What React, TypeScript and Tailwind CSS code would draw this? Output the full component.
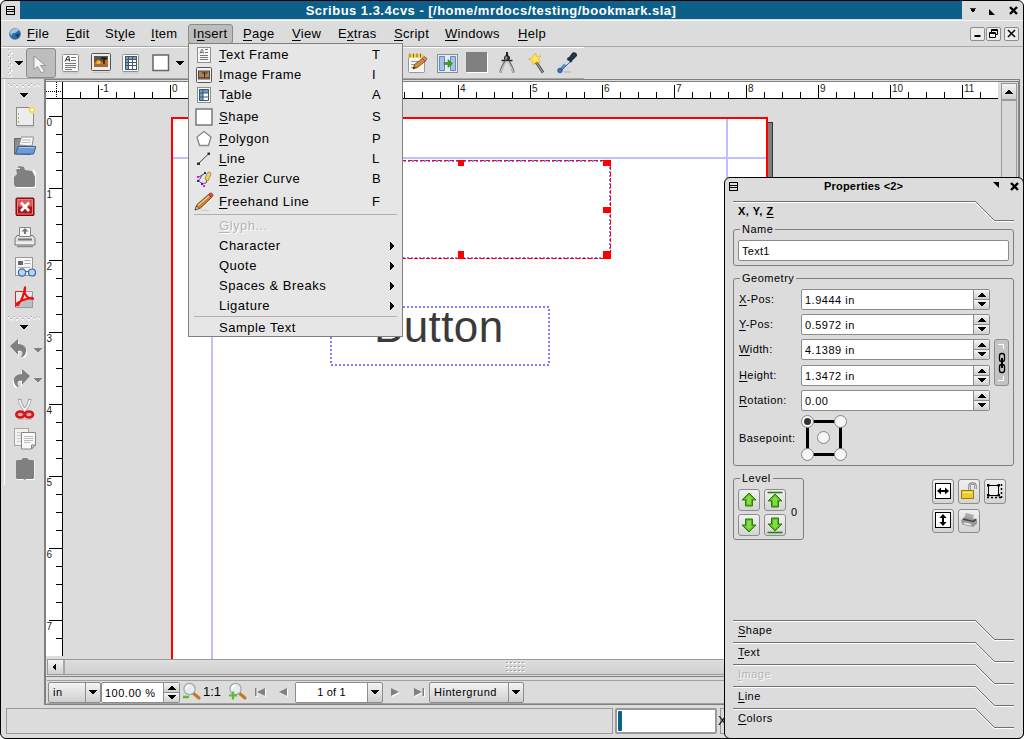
import React from "react";

/* Renders a caption whose mnemonic letter is marked with "&". */
function Caption({ text }: { text: string }) {
  const m = text.match(/^(.*?)&(\S)(.*)$/);
  if (!m) return <>{text}</>;
  return (
    <>
      {m[1]}
      <span className="underline decoration-1 underline-offset-2">{m[2]}</span>
      {m[3]}
    </>
  );
}

function Svg({ w = 22, h = 22, children, className = "" }: { w?: number; h?: number; children: React.ReactNode; className?: string }) {
  return (
    <svg width={w} height={h} viewBox={`0 0 ${w} ${h}`} className={`block shrink-0 ${className}`}>
      {children}
    </svg>
  );
}

const Tri = ({ dir, color = "#000", className = "" }: { dir: "up" | "down" | "left" | "right"; color?: string; className?: string }) => {
  const d = { down: "M0 0h8L4 4.5z", up: "M0 4.5h8L4 0z", left: "M5 0v8L1 4z", right: "M0 0v8L5 4z" }[dir];
  return (
    <svg width={8} height={dir === "up" || dir === "down" ? 5 : 8} className={`block shrink-0 ${className}`} shapeRendering="crispEdges">
      <path d={d} fill={color} />
    </svg>
  );
};

/* ---------- toolbar icons ---------- */

const TextFrameIcon = () => (
  <Svg>
    <rect x="2.5" y="2.5" width="16" height="17" rx="1" fill="#fafafa" stroke="#8f9088" />
    <path d="M5 9.500l2.500-5h1.500l.5 5M6 7.800h3.500" stroke="#333" fill="none" />
    <path d="M11 5.500h5M11 8.500h5M5 11.500h11M5 13.500h11M5 15.500h11M5 17.500h7" stroke="#777" />
    <path d="M3 21h16" stroke="#c4c4c4" />
  </Svg>
);
const ImageFrameIcon = () => (
  <Svg>
    <rect x="1.500" y="1.500" width="19" height="17" rx="1" fill="#eee" stroke="#55574f" />
    <rect x="4" y="4" width="14" height="11" fill="#5b564f" />
    <path d="M4 11l4-3 4 2 6-3v5H4z" fill="#c9701f" />
    <circle cx="8.500" cy="10.500" r="2.200" fill="#f7b52c" />
    <path d="M14 14V7M11 7c2-2 4-1 6 0" stroke="#16120e" fill="none" strokeWidth="1.300" />
    <rect x="4" y="12" width="14" height="3" fill="#a2693a" />
    <path d="M2 20.500h18" stroke="#c4c4c4" />
  </Svg>
);
const TableIcon = () => (
  <Svg>
    <rect x="2.500" y="2.500" width="16" height="17" rx="1" fill="#fafafa" stroke="#8f9088" />
    <rect x="5" y="4" width="12" height="14" fill="#fff" />
    <path d="M5 4h12v4H8v10H5z" fill="#769fd0" />
    <path d="M5.500 4v14M8.500 4v14M12.500 4v14M16.500 4v14M5 4.500h12M5 7.500h12M5 10.500h12M5 13.500h12M5 17.500h12" stroke="#4a5563" />
    <path d="M3 21h16" stroke="#c4c4c4" />
  </Svg>
);
const ShapeIcon = () => (
  <Svg>
    <rect x="3" y="3" width="15.500" height="15.500" fill="#fff" stroke="#666" strokeWidth="1.500" />
  </Svg>
);
const PointerIcon = () => (
  <Svg>
    <path d="M4 4v13.500l3.500-3 4 6.500 3-2-4-5.500h5z" fill="#f4f4f4" stroke="#888" strokeWidth=".8" />
  </Svg>
);
const NotepadIcon = () => (
  <Svg>
    <rect x="2.500" y="4.500" width="16" height="16" rx="1" fill="#f7f7f5" stroke="#999" />
    <path d="M5 9.500h10M5 12.500h8M5 15.500h5" stroke="#999" />
    <path d="M2 2.500h16v3H2z" fill="#f2cf3c" />
    <path d="M4 1.500v4M7.500 1.500v4M11 1.500v4M14.500 1.500v4" stroke="#8b6f00" />
    <path d="M7 17l1.500-4.500L17 6l3 2.500-8.500 7z" fill="#d58a36" stroke="#724010" strokeWidth=".8" />
    <path d="M16 6.500L18 4.500l3 2-1.500 2.500z" fill="#e58a84" stroke="#8c3830" strokeWidth=".7" />
    <path d="M7 17l1-2.500 1.500 1.500z" fill="#222" />
  </Svg>
);
const LinkFramesIcon = () => (
  <Svg>
    <rect x="1.500" y="2.500" width="20" height="18" fill="#e6ebf2" stroke="#8a8f94" />
    <path d="M3.500 4.500h5v14h-5zM14.500 4.500h5v14h-5z" fill="#a5c2e4" stroke="#668abb" />
    <path d="M8 10.500h4V7.500l4.500 4-4.500 4v-3H8z" fill="#3fa01c" stroke="#25700c" strokeWidth=".5" />
  </Svg>
);
const GrayIcon = () => (
  <Svg>
    <path d="M1 1h21v20H1z" fill="#fff" />
    <path d="M0 0h21v20H0z" fill="#808080" />
  </Svg>
);
const CompassIcon = () => (
  <Svg>
    <path d="M11 7C8 11 5.500 15 4.500 20.500M11 7c3 4 5.500 8 6.500 13.500" stroke="#777" strokeWidth="2.500" fill="none" />
    <path d="M11 8C8.500 12 6 16 4.800 20M11 8c2.500 4 5 8 6.200 12" stroke="#e3e3e3" strokeWidth=".9" fill="none" />
    <path d="M5.500 8.500h3.500M13 8.500h3.500" stroke="#222" strokeWidth="1.500" />
    <path d="M11 0v4" stroke="#222" strokeWidth="2" />
    <circle cx="11" cy="6" r="2.500" fill="#444" stroke="#111" />
    <path d="M10 4.500v3" stroke="#ddd" />
  </Svg>
);
const WandIcon = () => (
  <Svg>
    <path d="M10 10l7 10.500" stroke="#555" strokeWidth="3" />
    <path d="M10 10l6.500 10" stroke="#aaa" strokeWidth="1" />
    <path d="M9.500 1l1.300 3.700 4.200-.8-2.700 3.300 2 3.500-4-1L7 13l-.4-4.200-4-1.700 3.900-1.700z" fill="#ffe94a" stroke="#e8b030" strokeWidth=".8" />
  </Svg>
);
const DropperIcon = () => (
  <Svg>
    <path d="M3 18L12 8l2 2L6 18z" fill="#5b8ed0" stroke="#335a8c" strokeWidth=".8" />
    <path d="M8 12l4-4.500 2 2-4 3.500z" fill="#d7e5f5" />
    <path d="M11.500 6l4 4M12.500 7.500l4-5.500c1-1.500 4-.5 3.500 1.500L15 8.500z" stroke="#1f2e3b" strokeWidth="2" fill="#2f4455" />
    <circle cx="4" cy="18.500" r="2.400" fill="#2f6fc1" stroke="#20508f" strokeWidth=".6" />
    <path d="M8 20h7" stroke="#bdbdbd" strokeWidth="1.500" />
  </Svg>
);

const NewIcon = () => (
  <Svg>
    <rect x="2.500" y="1.500" width="17" height="18" fill="#ececec" stroke="#8b8b85" />
    <path d="M4.500 7v2M4.500 11v2M4.500 15v2" stroke="#aaa" />
    <path d="M3 21h17" stroke="#bbb" />
    <circle cx="18" cy="4" r="3.500" fill="#f1e98d" />
    <circle cx="18" cy="4" r="1.500" fill="#fffdf0" />
    <circle cx="18" cy="4" r="2.300" fill="none" stroke="#e6cf3a" />
  </Svg>
);
const OpenIcon = () => (
  <Svg>
    <path d="M.5 18V2.500h6l1 2h9v14z" fill="#8d8d85" stroke="#666" />
    <path d="M5 9L7.500 1h12L18 10z" fill="#f8f8f8" stroke="#909090" />
    <path d="M8 4h9M7.500 6.500h9" stroke="#bbb" />
    <path d="M4 10.500h18L19.500 18H1.500z" fill="#6b9bd2" stroke="#33609c" />
    <path d="M5 11.500h15.500" stroke="#a9c7e9" />
  </Svg>
);
const SaveDisabledIcon = () => (
  <Svg>
    <path d="M2 21.500h20V8l-3-4" stroke="#fff" fill="none" strokeWidth="1.500" />
    <path d="M0 11l3-3-1-5 3-3 5 1 1 3 7 1 3 6v9l-2 1H2l-2-2z" fill="#808080" />
    <path d="M2 3l3-1 1 1" stroke="#fff" fill="none" />
  </Svg>
);
const CloseDocIcon = () => (
  <Svg>
    <rect x="2" y="2" width="18" height="17.500" rx="1" fill="#b51417" stroke="#770a0c" />
    <path d="M3 3h16v7c-5 1-10 2-16 0z" fill="#dd5a5c" />
    <path d="M3.500 3.500h15v14.500h-15z" fill="none" stroke="#e47f80" />
    <path d="M7 6.500l8 8.500M15 6.500L7 15" stroke="#fff" strokeWidth="2.600" />
  </Svg>
);
const PrintIcon = () => (
  <Svg>
    <path d="M3 9.500h16l2 3v6.500H1v-6.500z" fill="#e0e0e0" stroke="#777" />
    <path d="M5.500 1.500h11v9h-11z" fill="#f5f5f5" stroke="#888" />
    <path d="M11 2l3.500 3.500H12V8h-2V5.500H7.500z" fill="#777" />
    <path d="M4 13.500h14" stroke="#777" strokeWidth="2" />
    <path d="M2 17h18" stroke="#fff" />
    <path d="M3 20.500h16" stroke="#888" strokeWidth="1.500" />
  </Svg>
);
const PreviewIcon = () => (
  <Svg>
    <rect x="1.500" y="1.500" width="17" height="18" fill="#f7f7f5" stroke="#999" />
    <rect x="4" y="5" width="5" height="4" fill="#666" />
    <path d="M10.500 4.500h6M10.500 7.500h6M4 11.500h12" stroke="#aaa" />
    <circle cx="8" cy="16.500" r="3.700" fill="#b9d3f2" stroke="#3465a4" strokeWidth="1.200" />
    <circle cx="18" cy="16.500" r="3.500" fill="#b9d3f2" stroke="#3465a4" strokeWidth="1.200" />
    <path d="M11.500 16q1.500-1.500 3 0" stroke="#3465a4" fill="none" />
  </Svg>
);
const PdfIcon = () => (
  <Svg>
    <path d="M1.500 5.500h17v16h-17z" fill="#e6e9ea" stroke="#999" />
    <path d="M1.500 21V5.500h8" stroke="#d22" fill="none" />
    <path d="M2 21L18 9v12z" fill="#b9bfc3" />
    <path d="M11 .5c1 3-1 5 0 7 2 4 5 6 9 5M11 1c-1 7-2 12-7 18-2 1-2-2 1-3 4-2 8-4 14-4" stroke="#f00d0d" strokeWidth="2" fill="none" />
  </Svg>
);
const Undo = ({ flip = false }: { flip?: boolean }) => (
  <Svg w={18} h={20} className={flip ? "-scale-x-100" : ""}>
    <path d="M1 8L9 2v5c6 0 9 4 8 8-1 4-3 4-4 4 2-4 0-7-4-6v5z" fill="#fff" />
    <path d="M0 7L8 0v5c6 0 9 4 8 8-1 4-3 5-5 5 3-4 1-7-3-6v4z" fill="#808080" />
  </Svg>
);
const CutIcon = () => (
  <Svg>
    <path d="M5.500 1c1 5 3 9 6 12M16 1c-1 5-3 9-6 12" stroke="#999" strokeWidth="3.400" fill="none" />
    <path d="M5.500 2c1 4 3 8 6 11M16 2c-1 4-3 8-6 11" stroke="#f2f2f2" strokeWidth="1.800" fill="none" />
    <ellipse cx="6.300" cy="16.500" rx="4" ry="3" fill="#e9a4a4" stroke="#d01a1e" strokeWidth="2.600" />
    <ellipse cx="15" cy="16.500" rx="4" ry="3" fill="#e9a4a4" stroke="#d01a1e" strokeWidth="2.600" />
    <path d="M4 21.500h14" stroke="#c4c4c4" />
  </Svg>
);
const CopyIcon = () => (
  <Svg>
    <rect x=".5" y=".5" width="14" height="17" fill="#f0f0ee" stroke="#a8a8a2" />
    <path d="M3 4.500h9M3 7.500h9M3 10.500h5M3 13.500h5" stroke="#ccc" />
    <path d="M7.500 4.500h14V17l-4 4h-10z" fill="#fafafa" stroke="#888" />
    <path d="M10 8.500h9M10 10.500h9M10 12.500h9M10 14.500h6" stroke="#bbb" />
    <path d="M17.500 21v-4h4z" fill="#ccc" stroke="#888" />
  </Svg>
);
const PasteIcon = () => (
  <Svg>
    <path d="M3 3h17.500v19H3z" fill="#fff" />
    <path d="M2 3l1-1h4l2-2h4l2 2h4l1 1v17l-1 1h-7l-1 1-2-1H3l-1-1z" fill="#808080" />
  </Svg>
);

/* ---------- menu icons ---------- */

const MTextIcon = () => (
  <Svg w={18} h={18}>
    <rect x="2.500" y="1.500" width="13" height="15" fill="#fafafa" stroke="#8f9088" />
    <path d="M5 7.500l1.500-4h1l1 4M5 6.500h3M10 3.500h3M10 6.500h3M5 9.500h8M5 11.500h8M5 13.500h8" stroke="#666" fill="none" strokeWidth=".9" />
  </Svg>
);
const MImageIcon = () => (
  <Svg w={18} h={18}>
    <rect x="1.500" y="1.500" width="15" height="15" rx="1" fill="#f2f2f2" stroke="#555" />
    <rect x="3.500" y="5" width="11" height="8" fill="#a2835c" stroke="#443c34" strokeWidth=".9" />
    <path d="M9.500 12V6.500M7 7h5.500" stroke="#3a2418" />
    <path d="M4 11.500h10" stroke="#8c3c20" />
  </Svg>
);
const MTableIcon = () => (
  <Svg w={18} h={18}>
    <rect x="2.500" y="1.500" width="13" height="15" fill="#fafafa" stroke="#8f9088" />
    <path d="M4 3h10v4H8v8H4z" fill="#6f9bd0" />
    <path d="M4.500 3.500h9v11h-9zM8 3.500v11M4.500 7h9M4.500 11h9" stroke="#3c5878" fill="none" />
  </Svg>
);
const MShapeIcon = () => (
  <Svg w={18} h={18}>
    <rect x="1" y="1" width="16" height="16" fill="#fff" stroke="#666" strokeWidth="1.300" />
  </Svg>
);
const MPolygonIcon = () => (
  <Svg w={18} h={18}>
    <path d="M9 1.500l7 5.500-2.500 8.500h-9L2 7z" fill="#fff" stroke="#888" strokeWidth="1.300" />
  </Svg>
);
const MLineIcon = () => (
  <Svg w={18} h={18}>
    <path d="M3.500 13.500L14 3.500" stroke="#444" />
    <path d="M2 12.500h3v2.500H2zM12.500 2.500H15V5h-2.500z" fill="#333" />
  </Svg>
);
const MBezierIcon = () => (
  <Svg w={18} h={18}>
    <path d="M4 7l3-2 4-2M4 9c0 4 3 5 7 4l1-3M7 5L5 9" stroke="#555" fill="none" />
    <path d="M10 9l2-6 3-1 1 2-3 7z" fill="#f2cf57" stroke="#8f7a30" strokeWidth=".7" />
    <path d="M2 6h2v2H2zM8 15h2v2H8z" fill="#f0f" />
    <path d="M2 10h2v2H2zM9 2h2v2H9zM6 13h2v2H6z" fill="#22e" />
  </Svg>
);
const MPencilIcon = () => (
  <Svg w={20} h={20}>
    <path d="M1 18l2-5.500L14.500 2.500l3 3L6.500 16z" fill="#c98436" stroke="#6c3f12" strokeWidth=".9" />
    <path d="M4 13.500L15 4" stroke="#f0c58a" strokeWidth="1.400" />
    <path d="M14.500 2.500L16 1c2-.5 3.500 1.500 3 3l-1.500 1.500z" fill="#e4474b" stroke="#922" strokeWidth=".6" />
    <path d="M1 18l1.500-4L5 16.500z" fill="#ecd2a5" stroke="#333" strokeWidth=".6" />
    <path d="M7 18.500h8" stroke="#ccc" />
  </Svg>
);

type Row = { label: string; key?: string; icon?: React.ReactNode; size?: string; sub?: boolean; off?: boolean };

const insertTop: Row[] = [
  { label: "&Text Frame", key: "T", icon: <MTextIcon /> },
  { label: "&Image Frame", key: "I", icon: <MImageIcon /> },
  { label: "T&able", key: "A", icon: <MTableIcon /> },
  { label: "&Shape", key: "S", icon: <MShapeIcon />, size: "h-[24px]" },
  { label: "&Polygon", key: "P", icon: <MPolygonIcon /> },
  { label: "&Line", key: "L", icon: <MLineIcon /> },
  { label: "&Bezier Curve", key: "B", icon: <MBezierIcon /> },
  { label: "&Freehand Line", key: "F", icon: <MPencilIcon />, size: "h-[25px] pt-px" },
];
const insertMid: Row[] = [
  { label: "&Glyph...", off: true },
  { label: "Character", sub: true },
  { label: "Quote", sub: true },
  { label: "Spaces & Breaks", sub: true },
  { label: "Ligature", sub: true },
];

function MenuRow({ r }: { r: Row }) {
  return (
    <div className={`flex shrink-0 items-center ${r.size ?? "h-[20px]"} ${r.off ? "text-[#b4b4b4] [text-shadow:1px_1px_0_#fff]" : ""}`}>
      <div className="flex w-[30px] justify-center">{r.icon}</div>
      <div className="w-[153px] whitespace-nowrap">
        <Caption text={r.label} />
      </div>
      <div className="flex-1">{r.key}</div>
      {r.sub && <Tri dir="right" className="mr-[4px]" />}
    </div>
  );
}

function InsertMenu() {
  return (
    <div className="absolute left-[188px] top-[43px] flex h-[294px] w-[215px] flex-col overflow-hidden border border-[#808080] bg-[#e6e6e6] pt-px text-[13px] leading-[20px] tracking-[0.5px]">
      {insertTop.map((r) => <MenuRow key={r.label} r={r} />)}
      <div className="mx-[5px] h-[2px] shrink-0 border-t border-[#b0b0b0]" />
      {insertMid.map((r) => <MenuRow key={r.label} r={r} />)}
      <div className="mx-[5px] h-[2px] shrink-0 border-t border-[#b0b0b0]" />
      <MenuRow r={{ label: "Sample Text" }} />
    </div>
  );
}

/* ---------- main window ---------- */

const SysIcon = () => (
  <svg width={9} height={9} className="block" shapeRendering="crispEdges">
    <path d="M.5 .5h8v8h-8zM0 3.500h9M0 5.500h9" fill="none" stroke="#000" />
  </svg>
);
const CloseX = () => (
  <svg width={9} height={9} className="block">
    <path d="M1 1l7 7M8 1L1 8" stroke="#000" strokeWidth="2.400" />
  </svg>
);

function TitleBar() {
  return (
    <div className="flex h-[18px] shrink-0">
      <div className="flex w-[19px] items-center pl-[5px]"><SysIcon /></div>
      <div className="w-[942px] bg-[#0b5f8a] text-center text-[13px] font-bold leading-[20px] tracking-[0.48px] text-white">
        Scribus 1.3.4cvs - [/home/mrdocs/testing/bookmark.sla]
      </div>
      <div className="flex flex-1 items-center">
        <Tri dir="down" className="ml-[7px] scale-90" />
        <svg width={6} height={6} className="ml-[12px] mt-[3px] block"><path d="M0 0v6h6z" /></svg>
        <div className="ml-[14px]"><CloseX /></div>
      </div>
    </div>
  );
}

const WinBtn = ({ children, className = "" }: { children: React.ReactNode; className?: string }) => (
  <div className={`flex h-[14px] w-[15px] items-center justify-center rounded-[2px] border border-[#8c8c8c] bg-[#ececec] ${className}`}>
    <svg width={11} height={11} className="block shrink-0" fill="none" stroke="#000">{children}</svg>
  </div>
);

function MenuBar() {
  return (
    <div className="mt-px flex h-[27px] shrink-0 items-center border-b border-t border-b-[#a8a8a8] border-t-[#f4f4f4] text-[13px] leading-[18px] tracking-[0.3px]">
      <svg width={14} height={14} className="ml-[7px] block">
        <circle cx="7" cy="7" r="5.800" fill="#2f6ca3" />
        <path d="M2 5C4 1 9 1 11 3c-2 1-3 3-5 3S4 8 3 9z" fill="#a4c7de" />
        <path d="M7 8l5-2-2 5z" fill="#123f6d" />
      </svg>
      <div className="ml-[5px] w-[39px]"><Caption text="&File" /></div>
      <div className="w-[39px]"><Caption text="&Edit" /></div>
      <div className="w-[46px]"><Caption text="St&yle" /></div>
      <div className="w-[37px]"><Caption text="&Item" /></div>
      <div className="mr-[10px] h-[20px] w-[45px] rounded-[3px] border border-[#8c8c8c] bg-[#bdbdbd] pl-[4px]"><Caption text="I&nsert" /></div>
      <div className="w-[49px]"><Caption text="&Page" /></div>
      <div className="w-[46px]"><Caption text="&View" /></div>
      <div className="w-[56px]"><Caption text="E&xtras" /></div>
      <div className="w-[51px]"><Caption text="&Script" /></div>
      <div className="w-[73px]"><Caption text="&Windows" /></div>
      <div className="flex-1"><Caption text="&Help" /></div>
      <div className="mr-[4px] flex">
        <WinBtn><path d="M2.500 8h6" strokeWidth="2" /></WinBtn>
        <WinBtn className="ml-px"><path d="M1.500 4.500h6v5h-6zM1.500 5.500h6M3.500 4V1.500h6v5H8M3.500 2.500h6" /></WinBtn>
        <WinBtn className="ml-[3px]"><path d="M2 2l7 7M9 2L2 9" strokeWidth="1.500" /></WinBtn>
      </div>
    </div>
  );
}

const Slot = ({ children, active = false }: { children?: React.ReactNode; active?: boolean }) => (
  <div className={`flex h-[30px] w-[30px] shrink-0 items-center justify-center ${active ? "rounded-[3px] border border-[#8c8c8c] bg-[#bdbdbd]" : ""}`}>{children}</div>
);

function ToolBar() {
  return (
    <div className="flex h-[32px] w-[583px] shrink-0 items-center border-b border-t border-b-[#a8a8a8] border-t-white pr-[2px]">
      <svg width={8} height={28} className="ml-[5px] block">
        <path d="M3 0l3 3-3 3 3 3-3 3 3 3-3 3 3 3-3 3 3 3" transform="translate(0 1)" fill="none" stroke="#fff" strokeDasharray="2 2" strokeWidth="1.500" />
        <path d="M2 0l3 3-3 3 3 3-3 3 3 3-3 3 3 3-3 3 3 3" fill="none" stroke="#aaa" strokeDasharray="2 2" />
      </svg>
      <Tri dir="down" className="mx-px" />
      <div className="w-[2px]" />
      <Slot active><PointerIcon /></Slot>
      <Slot><TextFrameIcon /></Slot>
      <Slot><ImageFrameIcon /></Slot>
      <Slot><TableIcon /></Slot>
      <Slot><ShapeIcon /></Slot>
      <Tri dir="down" />
      <div className="flex-1" />
      <Slot><NotepadIcon /></Slot>
      <Slot><LinkFramesIcon /></Slot>
      <Slot><GrayIcon /></Slot>
      <Slot><CompassIcon /></Slot>
      <Slot><WandIcon /></Slot>
      <Slot><DropperIcon /></Slot>
    </div>
  );
}

const HandleH = () => (
  <svg width={34} height={6} className="block">
    <path d="M0 2l3 3 3-3 3 3 3-3 3 3 3-3 3 3 3-3 3 3 3-3 3 3" fill="none" stroke="#fff" strokeDasharray="2 2" strokeWidth="1.500" />
    <path d="M0 1l3 3 3-3 3 3 3-3 3 3 3-3 3 3 3-3 3 3 3-3 3 3" fill="none" stroke="#aaa" strokeDasharray="2 2" />
  </svg>
);

function SideBar() {
  return (
    <div className="flex w-[43px] shrink-0 flex-col">
      <div className="ml-[3px] flex h-[406px] flex-col items-center border-l border-white">
        <div className="mt-[3px]"><HandleH /></div>
        <Tri dir="down" className="-ml-[2px] mt-[5px]" />
        <div className="h-[4px]" />
        <Slot><NewIcon /></Slot>
        <Slot><OpenIcon /></Slot>
        <Slot><SaveDisabledIcon /></Slot>
        <Slot><CloseDocIcon /></Slot>
        <Slot><PrintIcon /></Slot>
        <Slot><PreviewIcon /></Slot>
        <Slot><PdfIcon /></Slot>
        <div className="mt-[3px]"><HandleH /></div>
        <Tri dir="down" className="-ml-[2px] mt-[4px]" />
        <div className="h-[4px]" />
        <div className="flex h-[30px] w-full items-center pl-[5px]"><Undo /><Tri dir="down" color="#808080" className="ml-[6px] mt-[2px]" /></div>
        <div className="flex h-[30px] w-full items-center pl-[7px]"><Undo flip /><Tri dir="down" color="#808080" className="ml-[4px] mt-[2px]" /></div>
        <Slot><CutIcon /></Slot>
        <Slot><CopyIcon /></Slot>
        <Slot><PasteIcon /></Slot>
      </div>
    </div>
  );
}

const hTicks = Array.from({ length: 51 }, (_, i) => 34 + i * 18).filter((x) => x < 952);
const vTicks = Array.from({ length: 31 }, (_, i) => 17 + i * 18).filter((y) => y < 556);
/* Inch marks 1 to 3 lie below the open menu. */
const hLabels = [-1, 0, 4, 5, 6, 7, 8, 9, 10, 11];

function HRuler() {
  return (
    <svg width={952} height={17} className="block shrink-0 bg-white" shapeRendering="crispEdges">
      <path d="M0 9.500h16M10.500 0v16" stroke="#000" strokeDasharray="1 1" />
      <path d="M16.500 0v17M0 16.500h952" stroke="#000" />
      {hTicks.map((x, i) => <path key={x} d={`M${x + 0.5} ${(i - 1) % 4 === 0 ? 3 : 10}V17`} stroke="#000" />)}
      {hLabels.map((n) => (
        <text key={n} x={126 + n * 72} y={9.500} fontSize={10} fill="#222">{n}</text>
      ))}
    </svg>
  );
}

function VRuler() {
  return (
    <svg width={17} height={560} className="block shrink-0" shapeRendering="crispEdges">
      <path d="M0 0h17v557H0z" fill="#fff" />
      <path d="M16.500 0v557" stroke="#000" />
      {vTicks.map((y, i) => <path key={y} d={`M${i % 4 === 0 ? 3 : 10} ${y + 0.5}H17`} stroke="#000" />)}
      {Array.from({ length: 8 }, (_, i) => (
        <text key={i} x={0.500} y={27 + i * 72} fontSize={10} fill="#222">{i}</text>
      ))}
    </svg>
  );
}

/* The document page with its guides and frames, drawn in canvas units. */
function Canvas() {
  return (
    <div className="relative h-[560px] w-[935px] overflow-hidden bg-[#dcdcdc]">
      <svg width={935} height={560} viewBox="63 99 935 560" className="block" shapeRendering="crispEdges">
        <rect x="768" y="122" width="5" height="540" fill="#808080" />
        <path d="M768 122.500h4.500V660" stroke="#333" fill="none" />
        <rect x="172" y="118" width="595" height="560" fill="#fff" stroke="#f00" strokeWidth="2" />
        <path d="M173 158h593M212 119v560M727 119v560" stroke="#c0c0ff" strokeWidth="2" />
        <path d="M300 161h310V258H300" stroke="#8080ff" strokeWidth="2" strokeDasharray="2 2" fill="none" />
        <path d="M300 160.500H611M610.500 160V259M300 258.500H611" stroke="#f00" strokeDasharray="4 2" fill="none" />
        <path d="M458 160h6v6h-6zM603 160h8v6h-8zM603 207h8v6h-8zM603 251h8v8h-8zM458 251h6v8h-6z" fill="#f00" />
        <rect x="331" y="307" width="218" height="58" stroke="#7f7fff" strokeWidth="2" strokeDasharray="2 2" fill="none" />
      </svg>
      <div className="absolute left-[311px] top-[203px] text-[44px] leading-[50px] tracking-[0.4px] text-[#3a3a3a]">Button</div>
    </div>
  );
}

const btn = "bg-linear-to-b from-[#f4f4f4] to-[#cfcfcf]";

function Combo({ text, w, white = false }: { text: string; w: string; white?: boolean }) {
  return (
    <div className={`flex h-[21px] overflow-hidden rounded-[2px] border border-[#8c8c8c] ${w} ${btn}`}>
      <div className={`flex-1 whitespace-nowrap leading-[19px] ${white ? "bg-white text-center tracking-[0.2px]" : "pl-[4px]"}`}>{text}</div>
      <div className="flex w-[15px] items-center justify-center border-l border-[#8c8c8c]"><Tri dir="down" /></div>
    </div>
  );
}

function Spin({ text, w }: { text: string; w: string }) {
  return (
    <div className={`flex h-[21px] overflow-hidden rounded-[2px] border border-[#8c8c8c] bg-white ${w}`}>
      <div className="flex-1 whitespace-nowrap pl-[3px] leading-[20px]">{text}</div>
      <div className="flex w-[16px] flex-col border-l border-[#8c8c8c]">
        <div className={`flex flex-1 items-center justify-center border-b border-[#8c8c8c] ${btn}`}><Tri dir="up" /></div>
        <div className={`flex flex-1 items-center justify-center ${btn}`}><Tri dir="down" /></div>
      </div>
    </div>
  );
}

const Magnifier = ({ plus = false }: { plus?: boolean }) => (
  <Svg w={20} h={20}>
    <path d="M11 11l6 5" stroke="#c57a22" strokeWidth="3.200" strokeLinecap="round" />
    <circle cx="7.500" cy="7" r="5.600" fill="#e3edf2" stroke="#a0a6a8" strokeWidth="1.200" />
    <path d="M4 7c0-2 2-4 4-3.500" stroke="#fff" fill="none" strokeWidth="1.500" />
    {plus ? <path d="M1 13.500h8M5 9.500v8" stroke="#5bbf2b" strokeWidth="2.200" /> : <path d="M1 15h6" stroke="#5bbf2b" strokeWidth="2.400" />}
  </Svg>
);

const Nav = ({ d, className = "" }: { d: string; className?: string }) => (
  <svg width={12} height={10} className={`block shrink-0 ${className}`}>
    <path d={d} transform="translate(1 1)" fill="#fff" />
    <path d={d} fill="#808080" />
  </svg>
);

function ViewBar() {
  return (
    <div className="ml-px mt-[3px] flex h-[24px] items-center border-y border-[#a0a0a0] text-[11px] tracking-[0.5px]">
      <Combo text="in" w="ml-px w-[53px]" />
      <Spin text="100.00 %" w="w-[79px]" />
      <div className="ml-[2px]"><Magnifier /></div>
      <div className="ml-[1px] w-[25px] text-[13px] tracking-[0px]">1:1</div>
      <Magnifier plus />
      <Nav className="ml-[7px] mt-px" d="M0 0h1.500v8H0zM10 0v8L2 4z" />
      <Nav className="ml-[12px] mt-px" d="M8 0v8L0 4z" />
      <div className="ml-[4px]"><Combo text="1 of 1" w="w-[88px]" white /></div>
      <Nav className="ml-[8px] mt-px" d="M0 0v8l8-4z" />
      <Nav className="ml-[11px] mt-px" d="M0 0v8l8-4zM8.500 0H10v8H8.500z" />
      <div className="ml-[3px]"><Combo text="Hintergrund" w="w-[95px]" /></div>
    </div>
  );
}

function Workspace() {
  return (
    <div className="flex w-[976px] flex-col border-y border-l-2 border-r border-[#808080]">
      <div className="mt-px flex h-[597px] flex-col border-y border-r border-[#808080]">
        <div className="flex">
          <div className="flex flex-col">
            <HRuler />
            <div className="flex"><VRuler /><Canvas /></div>
          </div>
          <div className="ml-[3px] mt-px flex w-[16px] flex-col border border-[#999]">
            <div className={`flex h-[15px] items-center justify-center ${btn}`}><Tri dir="up" /></div>
            <div className="flex-1 border-t-2 border-[#999] bg-[#d8d8d8]" />
          </div>
        </div>
        <div className="ml-px flex h-[16px] border border-[#999]">
          <div className={`flex w-[15px] items-center justify-center ${btn}`}><Tri dir="left" className="-ml-px" /></div>
          <div className="flex flex-1 items-center border-l-2 border-[#a8a8a8] bg-linear-to-b from-[#dedede] to-[#d0d0d0] pl-[441px]">
            <svg width={20} height={11} className="block" shapeRendering="crispEdges">
              {[0, 4, 8].map((y) => (
                <g key={y}>
                  <path d={`M1 ${y + 1.5}h18`} stroke="#fff" strokeDasharray="2 2" />
                  <path d={`M0 ${y + 0.5}h18`} stroke="#a0a0a0" strokeDasharray="2 2" />
                </g>
              ))}
            </svg>
          </div>
        </div>
      </div>
      <ViewBar />
    </div>
  );
}

function MainWindow() {
  return (
    <div className="flex h-[739px] w-[1024px] flex-col overflow-hidden rounded-[6px] border border-black bg-[#dcdcdc]">
      <TitleBar />
      <MenuBar />
      <ToolBar />
      <div className="flex h-[626px] shrink-0">
        <SideBar />
        <Workspace />
      </div>
      <div className="ml-[5px] mt-[3px] flex h-[26px] shrink-0">
        <div className="w-[607px] border border-[#999]" />
        <div className="ml-[2px] flex w-[102px] rounded-[2px] border-2 border-[#999] bg-white p-px"><div className="w-[4px] rounded-[1px] bg-[#0b5f8a]" /></div>
        <div className="ml-[3px] w-[100px] border border-[#999] text-[13px] leading-[24px]"><span className="-ml-[3px]">X</span></div>
      </div>
    </div>
  );
}

/* ---------- properties palette ---------- */

function Tab({ label, bold = false, off = false }: { label: string; bold?: boolean; off?: boolean }) {
  return (
    <div className="grid h-[22px] shrink-0">
      <svg width={281} height={22} className="col-start-1 row-start-1 block">
        <path d="M0 1.500h242l19 19h20" fill="none" stroke="#fff" />
        <path d="M0 .5h242.500l19 19H281" fill="none" stroke="#707070" />
      </svg>
      <div className={`col-start-1 row-start-1 pl-[5px] leading-[21px] ${bold ? "font-bold" : ""} ${off ? "text-[#b4b4b4] [text-shadow:1px_1px_0_#fff]" : ""}`}>
        <Caption text={label} />
      </div>
    </div>
  );
}

function Group({ title, className, children }: { title: string; className: string; children: React.ReactNode }) {
  return (
    <div className={`flex flex-col rounded-[3px] border border-[#808080] ${className}`}>
      <div className="-mt-[8px] ml-[6px] h-[14px] w-fit bg-[#dcdcdc] px-[2px] leading-[15px]">{title}</div>
      {children}
    </div>
  );
}

function Field({ label, value }: { label: string; value: string }) {
  return (
    <div className="flex h-[25.2px] items-start">
      <div className="w-[62px] leading-[20px] tracking-[0.4px]"><Caption text={label} /></div>
      <Spin text={value} w="w-[189px]" />
    </div>
  );
}

const PBtn = ({ children, h = "h-[22px]" }: { children: React.ReactNode; h?: string }) => (
  <div className={`flex w-[22px] items-center justify-center rounded-[3px] border border-[#8c8c8c] bg-linear-to-b from-[#f0f0f0] to-[#d4d4d4] ${h}`}>{children}</div>
);

const Green = ({ down = false, bar = false }: { down?: boolean; bar?: boolean }) => (
  <Svg w={18} h={18} className={down ? "-scale-y-100" : ""}>
    <path d={bar ? "M9 3l7 7h-3.500v6h-7v-6H2z" : "M9 2l7 7h-3.500v6h-7V9H2z"} fill="#4fb512" stroke="#2f7a12" />
    <path d={bar ? "M9 5l4 4H11v5.500H7V9H5z" : "M9 4l4 4H11v5.500H7V8H5z"} fill="#85d94a" />
    {bar && <path d="M1.500 1.500h15" stroke="#2f7a12" strokeWidth="1.600" />}
  </Svg>
);

function Properties() {
  return (
    <div className="absolute left-[724px] top-[177px] flex h-[562px] w-[300px] flex-col rounded-[6px] border border-black bg-[#dcdcdc] px-[8px] text-[11px] tracking-[0.5px]">
      <div className="-mx-[8px] flex h-[23px] shrink-0 items-start pt-[4px]">
        <div className="ml-[4px]"><SysIcon /></div>
        <div className="ml-[86px] w-[168px] font-bold leading-[9px] tracking-[0.2px]">Properties &lt;2&gt;</div>
        <svg width={6} height={6} className="ml-px block"><path d="M0 0h6v6z" /></svg>
        <div className="ml-[11px]"><CloseX /></div>
      </div>
      <Tab label="X, Y, &Z" bold />
      <Group title="Name" className="mt-[6px] h-[37px] w-[281px] shrink-0">
        <div className="ml-[4px] mt-[4px] h-[21px] w-[271px] rounded-[2px] border border-[#8c8c8c] bg-white pl-[3px] leading-[20px] tracking-[0.3px]">Text1</div>
      </Group>
      <Group title="Geometry" className="mt-[12px] h-[188px] w-[281px] shrink-0">
        <div className="ml-[5px] mt-[4px] flex">
          <div>
            <Field label="&X-Pos:" value="1.9444 in" />
            <Field label="&Y-Pos:" value="0.5972 in" />
            <Field label="&Width:" value="4.1389 in" />
            <Field label="&Height:" value="1.3472 in" />
            <Field label="&Rotation:" value="0.00" />
          </div>
          <div className="ml-[4px] mt-[50px] h-[47px] w-[15px] rounded-[3px] border border-[#8c8c8c] bg-[#c4c4c4]">
            <svg width={13} height={45} className="block" fill="none">
              <path d="M3 4.500h5.500V9M3 40.500h5.500V36" stroke="#fff" />
              <g stroke="#000" strokeWidth="1.300">
                <rect x="4.500" y="13.500" width="5" height="8" rx="2.200" />
                <rect x="4.500" y="24.500" width="5" height="8" rx="2.200" />
                <path d="M7 18v10" strokeWidth="2" />
              </g>
            </svg>
          </div>
        </div>
        <div className="ml-[5px] flex items-start">
          <div className="mt-[13px] w-[60px] leading-[20px] tracking-[0.45px]">Basepoint:</div>
          <svg width={48} height={48} className="-mt-[2px] block">
            <rect x="8.500" y="8.500" width="33" height="33" fill="none" stroke="#000" strokeWidth="3" />
            {[[8.5, 8.5], [41.5, 8.5], [8.5, 41.5], [41.5, 41.5], [24.5, 24.5]].map(([x, y]) => (
              <circle key={`${x}-${y}`} cx={x} cy={y} r={6} fill="#f6f6f6" stroke="#858585" />
            ))}
            <circle cx={8.500} cy={8.500} r={3.500} fill="#333" />
          </svg>
        </div>
      </Group>
      <div className="flex h-[142px] shrink-0">
        <Group title="Level" className="mt-[12px] h-[62px] w-[71px]">
          <div className="ml-[4px] mt-[4px] flex items-center">
            <div className="grid grid-cols-[26px_22px] gap-y-[3px]">
              <PBtn><Green /></PBtn>
              <PBtn><Green bar /></PBtn>
              <PBtn><Green down /></PBtn>
              <PBtn><Green down bar /></PBtn>
            </div>
            <div className="ml-[5px]">0</div>
          </div>
        </Group>
        <div className="ml-[128px] mt-[13px] grid h-[54px] grid-cols-[26px_26px_22px] gap-y-[4px]">
          <PBtn h="h-[25px]">
            <Svg w={16} h={16} className="-mt-px">
              <rect x=".5" y=".5" width="15" height="15" fill="#fff" stroke="#000" />
              <path d="M2 8l4-3.500v7zM14 8l-4-3.500v7z" /><path d="M4 8h8" stroke="#000" strokeWidth="2" />
            </Svg>
          </PBtn>
          <PBtn h="h-[25px]">
            <Svg w={18} h={18} className="-mt-px">
              <path d="M9.500 8V4q0-2.500 3-2.500t3 2.500v3" fill="none" stroke="#777" strokeWidth="2.400" />
              <path d="M9.500 8V4q0-2.500 3-2.500t3 2.500v3" fill="none" stroke="#ddd" strokeWidth=".9" />
              <rect x="1.500" y="8.500" width="12" height="8" fill="#f0c92d" stroke="#a07d10" />
              <path d="M3 10.500h9" stroke="#fff09a" />
            </Svg>
          </PBtn>
          <PBtn h="h-[25px]">
            <Svg w={16} h={16} className="-mt-px">
              <rect x="1.500" y="2.500" width="10" height="10" fill="#f0f0f0" stroke="#000" />
              <path d="M0 1h2.500v2.500H0zM10.500 1H13v2.500h-2.500zM0 11h2.500v2.500H0zM10.500 11H13v2.500h-2.500z" />
              <path d="M0 14.500h15.500M14.500 1v14" stroke="#000" strokeWidth="1.500" strokeDasharray="2 2" />
            </Svg>
          </PBtn>
          <PBtn h="h-[24px]">
            <Svg w={16} h={16} className="-mt-px">
              <rect x=".5" y=".5" width="15" height="15" fill="#fff" stroke="#000" />
              <path d="M8 2l-3.500 4h7zM8 14l-3.500-4h7z" /><path d="M8 4v8" stroke="#000" strokeWidth="2" />
            </Svg>
          </PBtn>
          <PBtn h="h-[24px]">
            <Svg w={18} h={18} className="-mt-px">
              <path d="M6 2l8 2-2 5-8-2z" fill="#aaa" />
              <path d="M1 9l4-3 12 2v5l-4 3-11-3z" fill="#9a9a9a" />
              <path d="M3 8l10 2.500 3-2" stroke="#444" strokeWidth="1.600" fill="none" />
              <path d="M2 13l8 2 3-2-8-2z" fill="#e6e6e6" stroke="#888" strokeWidth=".6" />
            </Svg>
          </PBtn>
        </div>
      </div>
      <div className="mt-[12px]">
        <Tab label="&Shape" />
        <Tab label="&Text" />
        <Tab label="&Image" off />
        <Tab label="&Line" />
        <Tab label="&Colors" />
      </div>
    </div>
  );
}

export default function App() {
  return (
    <div className="relative h-[739px] w-[1024px] overflow-hidden bg-white font-['Liberation_Sans',Arial,sans-serif] text-black">
      <MainWindow />
      <InsertMenu />
      <Properties />
    </div>
  );
}
